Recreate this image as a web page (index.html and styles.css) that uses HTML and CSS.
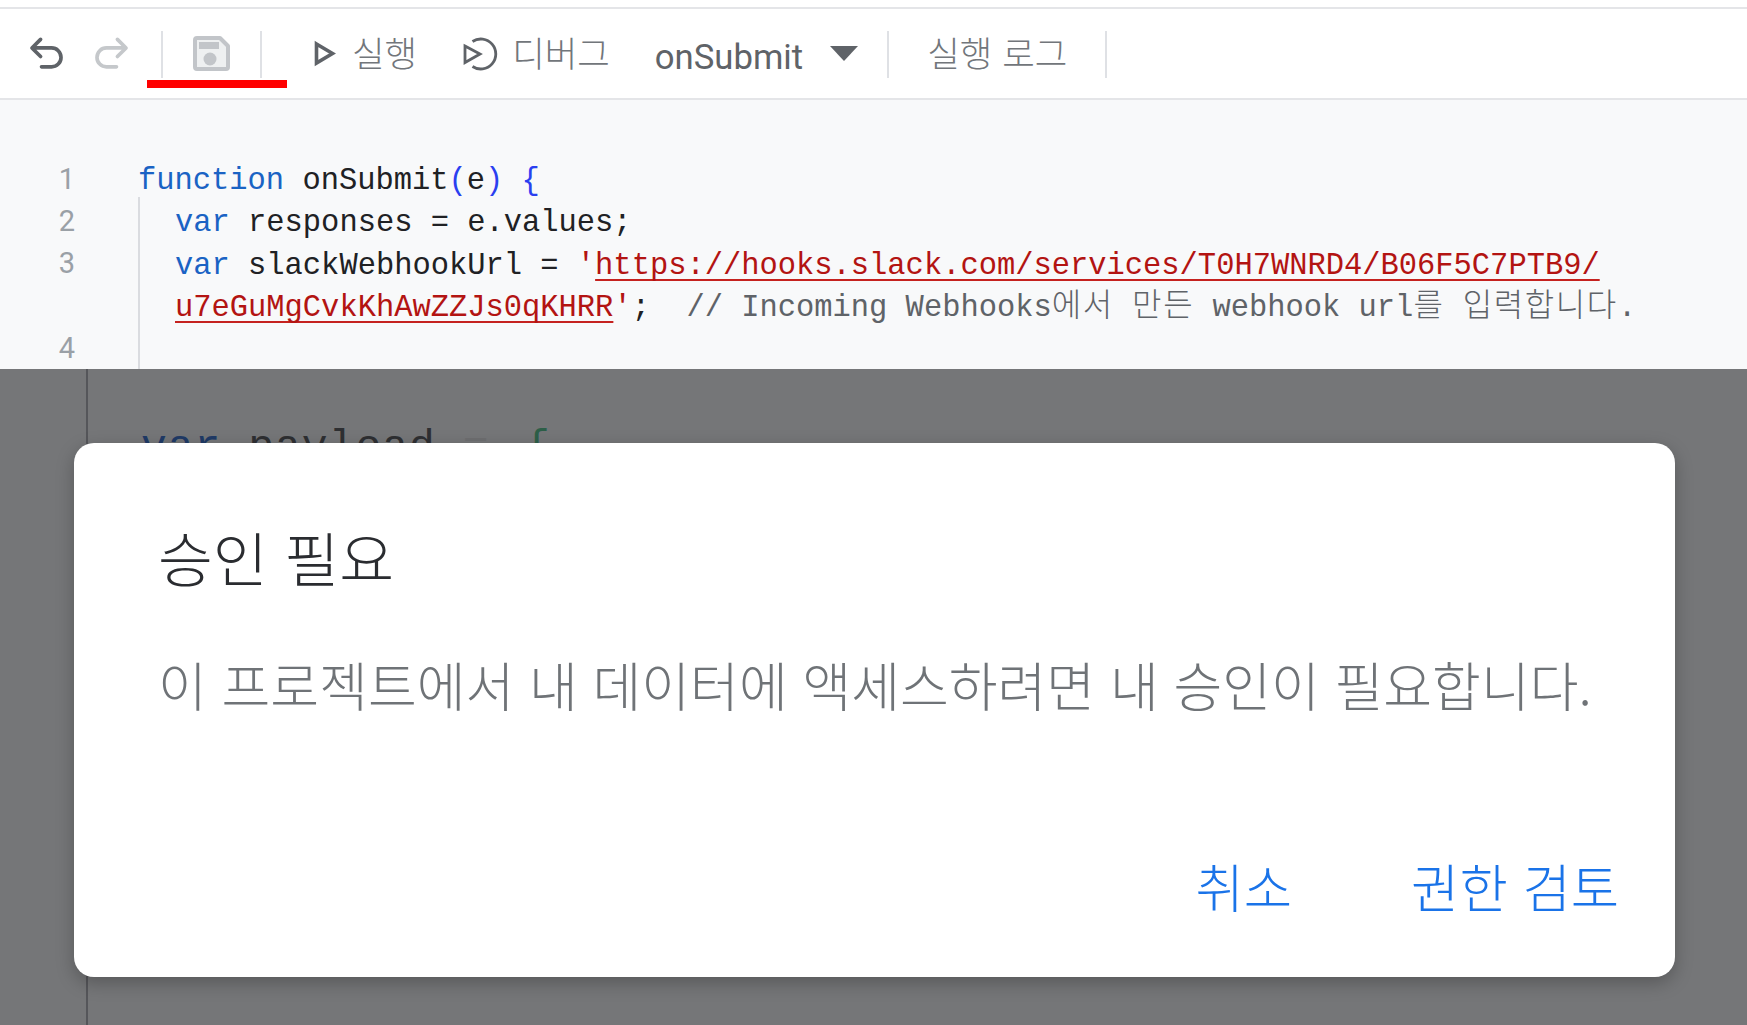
FILE: index.html
```html
<!DOCTYPE html>
<html lang="ko">
<head>
<meta charset="utf-8">
<title>승인 필요</title>
<link rel="stylesheet" href="styles.css">
</head>
<body>
<div class="page">
  <header class="toolbar">
    <div class="iconbtn">
      <svg class="ic" viewBox="0 0 24 24"><path class="st dark" d="M8.500 4 3.800 8.700l4.700 4.700M4.200 8.700h10.300a5 5 0 0 1 0 10.300H9"/></svg>
    </div>
    <div class="iconbtn second">
      <svg class="ic" viewBox="0 0 24 24"><path class="st faint" d="M15.500 4l4.700 4.700-4.700 4.700M19.800 8.700H9.500a5 5 0 0 0 0 10.300H15"/></svg>
    </div>
    <span class="sep sep-a"></span>
    <div class="savewrap">
      <svg class="save" viewBox="0 0 37 35"><path class="savebody" d="M4 2h23l8 8v21a2 2 0 0 1-2 2H4a2 2 0 0 1-2-2V4a2 2 0 0 1 2-2Z"/><rect class="savepart" x="6" y="6" width="20" height="7"/><circle class="savepart" cx="17" cy="23" r="6.500"/></svg>
    </div>
    <span class="sep sep-b"></span>
    <div class="action run">
      <svg class="play" viewBox="0 0 22 27"><path d="M2.500 4 18.500 13.500 2.500 23Z" class="tri"/></svg>
      <span>실행</span>
    </div>
    <div class="action debug">
      <svg class="dbg" viewBox="0 0 36 34"><path d="M9.500 4.500A15 15 0 1 1 9.500 29.500" class="circ"/><path d="M2 9 17 17 2 25.500Z" class="tri thin"/></svg>
      <span>디버그</span>
    </div>
    <div class="fn">onSubmit</div>
    <svg class="caret" viewBox="0 0 28 15"><path d="M0 0h28L14 15Z"/></svg>
    <span class="sep sep-c"></span>
    <div class="logs">실행 로그</div>
    <span class="sep sep-d"></span>
    <i class="redline"></i>
  </header>

  <section class="editor">
    <div class="line"><span class="num">1</span><code><b class="kw">function</b> onSubmit<b class="par">(</b>e<b class="par">)</b> <b class="par">{</b></code></div>
    <div class="guided">
      <div class="line"><span class="num">2</span><code class="in"><b class="kw">var</b> responses = e.values;</code></div>
      <div class="line"><span class="num">3</span><code class="in"><b class="kw">var</b> slackWebhookUrl = <b class="str">'<u>https://hooks.slack.com/services/T0H7WNRD4/B06F5C7PTB9/</u></b></code></div>
      <div class="line"><span class="num"></span><code class="in"><b class="str"><u>u7eGuMgCvkKhAwZZJs0qKHRR</u>'</b>;&nbsp; <b class="cmt">// Incoming Webhooks<span class="ko">에서</span> <span class="ko">만든</span> webhook url<span class="ko">를</span> <span class="ko">입력합니다</span>.</b></code></div>
      <div class="line"><span class="num">4</span><code class="in"></code></div>
    </div>
  </section>

  <section class="dimmed">
    <code class="behind"><b class="kwdim">var</b> payload <b class="eq">=</b> <b class="brace">{</b></code>
    <div class="dialog">
      <h1>승인 필요</h1>
      <p>이 프로젝트에서 내 데이터에 액세스하려면 내 승인이 필요합니다.</p>
      <div class="actions">
        <span>취소</span>
        <span>권한 검토</span>
      </div>
    </div>
  </section>
</div>
</body>
</html>
```
FILE: styles.css
```css
* { box-sizing: border-box; }
html, body { margin: 0; height: 100%; background: #fff; }
body { font-family: Roboto, "Noto Sans CJK KR", sans-serif; }
.page { width: 1747px; height: 1025px; display: flex; flex-direction: column; overflow: hidden; }

.toolbar {
  position: relative;
  height: 93px;
  margin-top: 7px;
  border-top: 2px solid #e4e5e8;
  border-bottom: 2px solid #e4e5e8;
  display: flex;
  align-items: center;
  background: #fff;
  color: #72767b;
  flex: none;
}
.iconbtn { display: flex; margin-left: 25px; }
.iconbtn.second { margin-left: 20px; }
.ic { width: 44px; height: 44px; }
.st { fill: none; stroke-width: 2; stroke-linecap: round; stroke-linejoin: round; }
.dark { stroke: #5f6368; }
.faint { stroke: #c5c8cb; }
.sep { width: 2px; height: 47px; background: #dfe1e5; flex: none; margin-top: 2px; }
.sep-a { margin-left: 28px; }
.savewrap { display: flex; margin-left: 30px; }
.save { width: 37px; height: 35px; }
.savebody { fill: #eef0f1; stroke: #c2c5c9; stroke-width: 4; stroke-linejoin: round; }
.savepart { fill: #c2c5c9; }
.sep-b { margin-left: 30px; }
.action { display: flex; align-items: center; font-size: 35.400px; line-height: 1; font-family: "Noto Sans CJK KR", sans-serif; font-weight: 300; }
.action span { margin-top: -4px; }
.run { margin-left: 52px; gap: 16px; }
.play { width: 22px; height: 27px; }
.tri { fill: none; stroke: #5f6368; stroke-width: 3.600; }
.tri.thin { stroke-width: 2.800; }
.circ { fill: none; stroke: #5f6368; stroke-width: 2.800; }
.debug { margin-left: 46px; gap: 13px; }
.dbg { width: 36px; height: 34px; }
.fn { margin-left: 45px; margin-top: 8px; font-size: 34.700px; line-height: 1; color: #5f6368; font-weight: 400; }
.caret { width: 28px; height: 15px; margin-left: 27px; fill: #5f6368; }
.sep-c { margin-left: 29px; }
.logs { margin-left: 38px; margin-top: -4px; font-size: 35.400px; line-height: 1; font-family: "Noto Sans CJK KR", sans-serif; font-weight: 300; }
.sep-d { margin-left: 38px; }
.redline { position: absolute; left: 147px; top: 71px; width: 140px; height: 8px; background: #ff0000; }

.editor { height: 269px; background: #f8f9fa; padding-top: 58px; overflow: hidden; flex: none; }
.line { display: flex; height: 42.300px; align-items: center; }
.num { width: 138px; padding-right: 63px; text-align: right; font: 29px/1 Roboto, sans-serif; color: #9aa0a6; flex: none; }
code { font: 30.450px/1 "Liberation Mono", "Noto Sans CJK KR", monospace; color: #202124; white-space: pre; }
.line code { padding-top: 4px; }
code b { font-weight: 400; }
.in { margin-left: 37px; }
.kw { color: #1a63c4; }
.par { color: #2a3ff0; }
.str { color: #b31412; }
.str u { text-decoration: underline; text-decoration-thickness: 2px; text-underline-offset: 5px; text-decoration-color: #c5221f; text-decoration-skip-ink: none; }
.cmt { color: #5f6368; }
.ko { font-family: "Noto Sans CJK KR", sans-serif; font-size: 32px; font-weight: 300; letter-spacing: 1.600px; line-height: 0; }
.guided { position: relative; }
.guided::before { content: ""; position: absolute; left: 138px; top: -3px; bottom: -60px; width: 2px; background: #dadce0; }

.dimmed { flex: 1; background: #757678; position: relative; overflow: hidden; }
.dimmed::before { content: ""; position: absolute; left: 86px; top: 0; bottom: 0; width: 2px; background: #55565a; }
.behind { position: absolute; left: 141px; top: 57px; font-size: 43px; letter-spacing: 1px; color: #2e2f32; }
.kwdim { color: #1f3a66; }
.eq { color: #6d6e70; }
.brace { color: #2d5f48; margin-left: 8px; }
.dialog {
  position: absolute;
  left: 74px;
  top: 74px;
  width: 1601px;
  height: 534px;
  background: #fff;
  border-radius: 20px;
  box-shadow: 0 6px 18px rgba(0,0,0,.25);
  padding: 81px 56px 0 84px;
  display: flex;
  flex-direction: column;
}
.dialog h1 { margin: 0; font: 300 59.600px/1.100 "Noto Sans CJK KR", sans-serif; color: #2a2c30; }
.dialog p { margin: 63px 0 0; font: 300 53px/1.200 "Noto Sans CJK KR", sans-serif; color: #6f7377; white-space: nowrap; }
.actions { margin-top: auto; margin-bottom: 60px; display: flex; justify-content: flex-end; gap: 119px; color: #1a73e8; font: 300 52.500px/1.200 "Noto Sans CJK KR", sans-serif; }
```
